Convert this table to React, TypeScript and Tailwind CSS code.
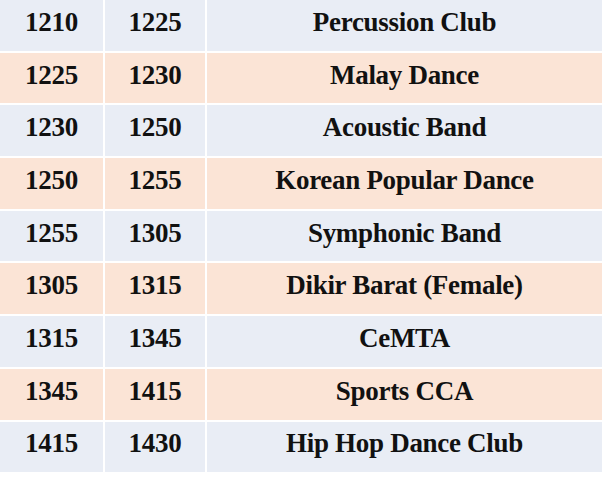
const rows = [
  { start: "1210", end: "1225", name: "Percussion Club" },
  { start: "1225", end: "1230", name: "Malay Dance" },
  { start: "1230", end: "1250", name: "Acoustic Band" },
  { start: "1250", end: "1255", name: "Korean Popular Dance" },
  { start: "1255", end: "1305", name: "Symphonic Band" },
  { start: "1305", end: "1315", name: "Dikir Barat (Female)" },
  { start: "1315", end: "1345", name: "CeMTA" },
  { start: "1345", end: "1415", name: "Sports CCA" },
  { start: "1415", end: "1430", name: "Hip Hop Dance Club" },
];

export default function App() {
  return (
    <div className="h-[482px] w-[605px] bg-white font-['Liberation_Serif',serif] text-[27px] font-bold text-[#111]">
      <div className="grid w-[602px] grid-cols-[103px_100px_395px] auto-rows-[50.7px] gap-[2px]">
        {rows.map((row, i) => {
          const bg = i % 2 === 0 ? "bg-[#e9edf5]" : "bg-[#fbe4d6]";
          return [row.start, row.end, row.name].map((text, j) => (
            <div key={`${i}-${j}`} className={`flex items-center justify-center pb-[6px] leading-none tracking-[-0.3px] ${bg}`}>
              {text}
            </div>
          ));
        })}
      </div>
    </div>
  );
}
